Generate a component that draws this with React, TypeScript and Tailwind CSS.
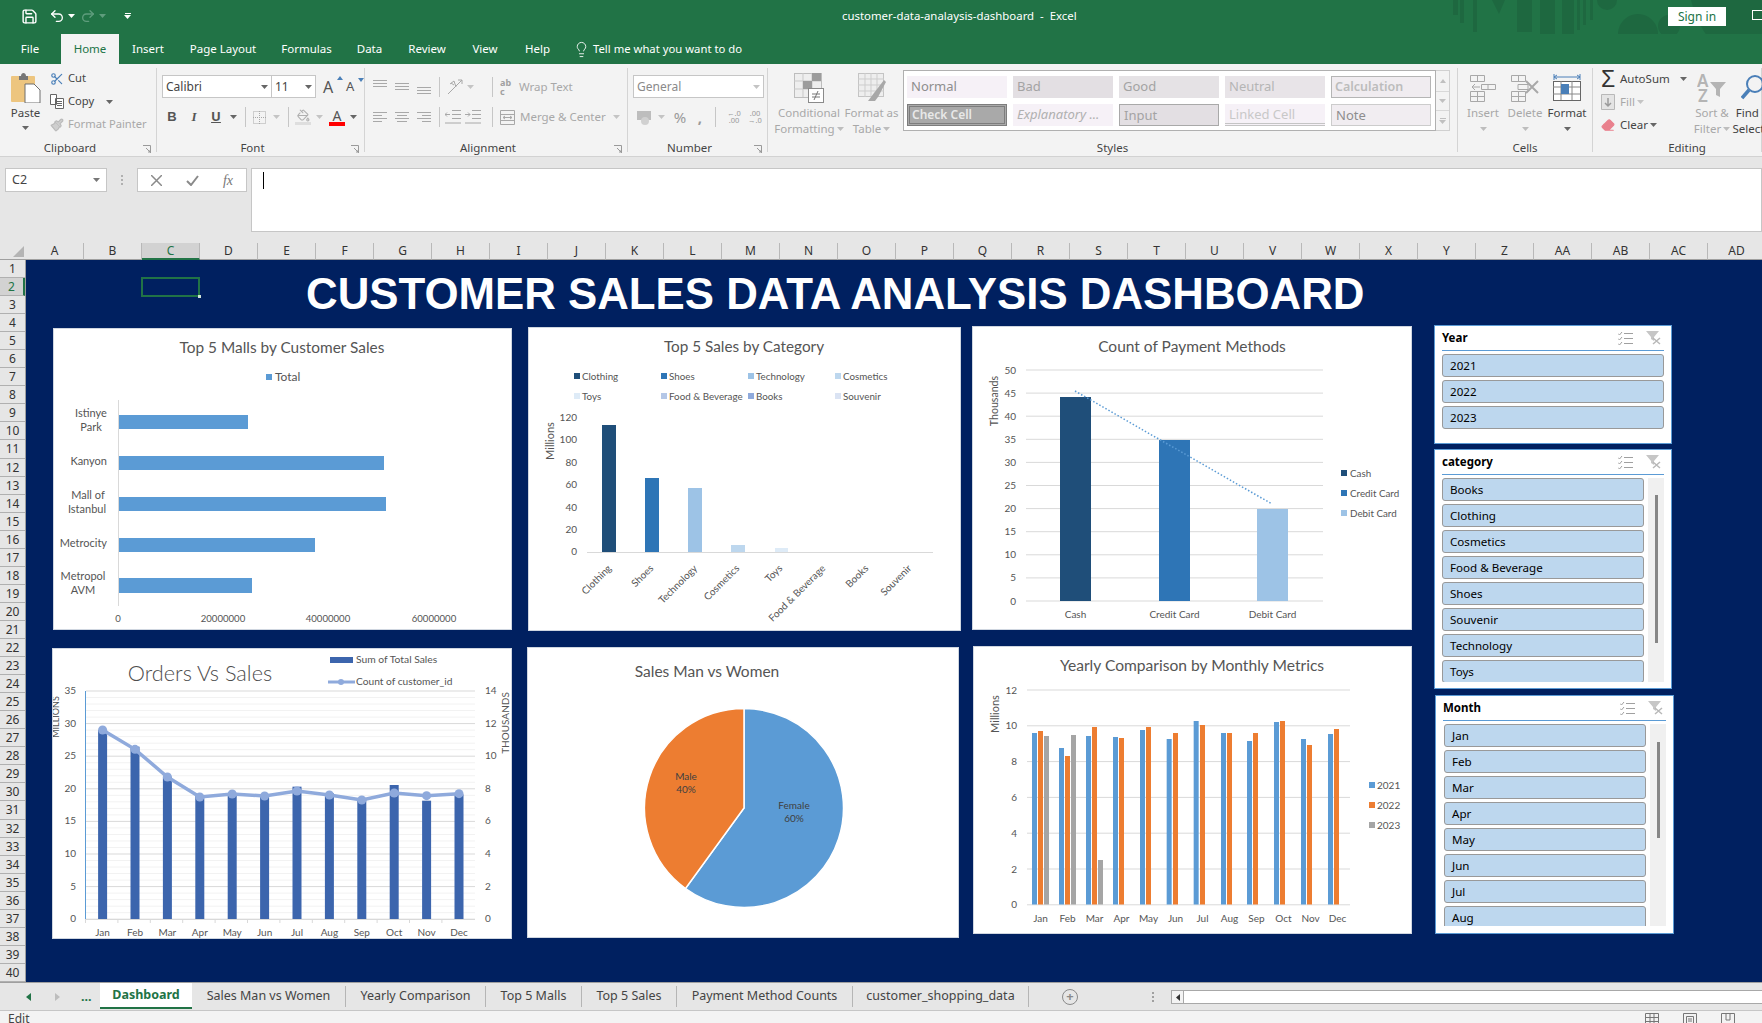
import { Eraser, Lightbulb, Paintbrush, PaintBucket, Save, Scissors, Undo2, Redo2 } from "lucide-react";

const COLUMNS = "A B C D E F G H I J K L M N O P Q R S T U V W X Y Z AA AB AC AD".split(" ");
const ROWS = Array.from({ length: 40 }, (_, i) => i + 1);
const MONTHS = ["Jan", "Feb", "Mar", "Apr", "May", "Jun", "Jul", "Aug", "Sep", "Oct", "Nov", "Dec"];
const GREY = "#a8a8a8";

function Caret({ color = "#666666" }: { color?: string }) {
  return (
    <svg width="7" height="4" viewBox="0 0 7 4" className="shrink-0">
      <path d="M0 0h7L3.5 4z" fill={color} />
    </svg>
  );
}

function Sep({ className = "" }: { className?: string }) {
  return <div className={`w-px h-[20px] bg-[#c6c6c6] shrink-0 ${className}`} />;
}

function Lines({ rows, color = GREY }: { rows: [number, number, number][]; color?: string }) {
  return (
    <svg width="16" height="16" viewBox="0 0 16 16">
      {rows.map(([x, y, w], i) => (
        <rect key={i} x={x} y={y} width={w} height="1" fill={color} />
      ))}
    </svg>
  );
}

function Slot({ w, children }: { w: string; children?: React.ReactNode }) {
  return <div className={`${w} flex items-center justify-center shrink-0`}>{children}</div>;
}

function Group({ label, w, launcher, labelClass = "", children }: { label: string; w: string; launcher?: boolean; labelClass?: string; children: React.ReactNode }) {
  return (
    <div className={`${w} h-[84px] border-r border-[#d4d4d4] shrink-0 flex flex-col`}>
      <div className="h-[72px] flex">{children}</div>
      <div className={`relative h-[12px] leading-[16px] text-center text-[11.5px] text-[#444444] ${labelClass}`}>
        {label}
        {launcher && (
          <svg width="8" height="8" viewBox="0 0 8 8" className="absolute right-[5px] top-[5px]">
            <path d="M0 .5h7.5V8M3 3l4 4M5 7h2V5" fill="none" stroke="#9a9a9a" />
          </svg>
        )}
      </div>
    </div>
  );
}

function BigButton({ w, icon, lines, dim, caret }: { w: string; icon: React.ReactNode; lines: string[]; dim?: boolean; caret?: boolean }) {
  return (
    <div className={`${w} shrink-0 flex flex-col items-center pt-[4px] text-[11.5px] leading-[16px] ${dim ? "text-[#a8a8a8]" : "text-[#444444]"}`}>
      <div className="h-[31px] flex items-center justify-center">{icon}</div>
      <div className="mt-[2px] whitespace-nowrap">{lines[0]}</div>
      {lines[1] ? (
        <div className="whitespace-nowrap flex items-center gap-[2px]">
          {lines[1]}
          {caret && <Caret color={dim ? "#bdbdbd" : "#666666"} />}
        </div>
      ) : (
        caret && (
          <div className="h-[16px] flex items-center">
            <Caret color={dim ? "#bdbdbd" : "#666666"} />
          </div>
        )
      )}
    </div>
  );
}

function StyleCell({ children, className }: { children: string; className: string }) {
  return <div className={`h-[22px] leading-[20px] pl-[4px] text-[13px] whitespace-nowrap overflow-hidden ${className}`}>{children}</div>;
}

function TitleBar() {
  return (
    <div className="relative h-[34px] bg-[#217346] flex items-center pb-[2px] text-white overflow-hidden shrink-0">
      <svg width="312" height="64" viewBox="0 0 312 64" className="absolute right-0 top-0" fill="#1e6840">
        <path d="M3 0h5v15H3zM10 0h4v23h-4zM23 0h4v32h-4zM42 0h13l-6 14zM67 0h15v32H67zM90 0h15v37H90zM112 0h12v35h-12zM127 0h3v30h-3zM133 0h3v25h-3zM140 0h3v20h-3z" />
        <circle cx="157" cy="0" r="10" />
        <path d="M208 34a20 20 0 1 0 0 .1zM208 26a11 11 0 1 1 0 .1z" fillRule="evenodd" />
        <path d="M241 0h71v52h-34c-18-6-30-26-37-52z" />
      </svg>
      <div className="relative flex items-center pl-[21px] w-[842px] shrink-0">
        <Save size={17} strokeWidth={2} />
        <Undo2 size={16} strokeWidth={2} className="ml-[11px]" />
        <div className="ml-[3px]"><Caret color="#ffffff" /></div>
        <Redo2 size={16} strokeWidth={2} className="ml-[5px] text-[#5f9d7d]" />
        <div className="ml-[3px]"><Caret color="#5f9d7d" /></div>
        <div className="ml-[18px] flex flex-col items-center gap-[1px]">
          <div className="w-[6px] h-px bg-white" />
          <Caret color="#ffffff" />
        </div>
      </div>
      <div className="relative text-[11.4px] whitespace-pre">customer-data-analaysis-dashboard  -  Excel</div>
      <div className="relative ml-auto mr-[36px] w-[58px] h-[19px] bg-white text-[#217346] text-[12px] leading-[19px] text-center">Sign in</div>
      <div className="absolute left-[1752px] top-[10px] w-[14px] h-[10px] border border-white" />
    </div>
  );
}

function MenuTabs() {
  const tabs: [string, string][] = [
    ["File", "w-[60px] mr-[1px]"],
    ["Home", "w-[58px]"],
    ["Insert", "w-[58px] mr-[2px]"],
    ["Page Layout", "w-[88px]"],
    ["Formulas", "w-[79px] mr-[1px]"],
    ["Data", "w-[45px] mr-[1px]"],
    ["Review", "w-[68px]"],
    ["View", "w-[48px]"],
    ["Help", "w-[57px] mr-[1px]"],
  ];
  return (
    <div className="h-[30px] bg-[#217346] flex text-white text-[11.5px] shrink-0">
      {tabs.map(([name, w]) => (
        <div key={name} className={`${w} flex items-center justify-center ${name === "Home" ? "bg-[#f3f3f3] text-[#217346]" : ""}`}>
          {name}
        </div>
      ))}
      <div className="flex items-center ml-[6px] gap-[3px]">
        <Lightbulb size={17} strokeWidth={1.25} />
        <span className="whitespace-nowrap text-[11.3px]">Tell me what you want to do</span>
      </div>
    </div>
  );
}

function Ribbon() {
  return (
    <div className="h-[93px] bg-[#f3f3f3] border-b border-[#d2d2d2] pt-[4px] flex text-[#444444] overflow-hidden shrink-0">
      <Group label="Clipboard" w="w-[157px]" launcher labelClass="pr-[16px]">
        <div className="w-[50px] flex flex-col items-center pl-[1px] pt-[4px] text-[11.5px] leading-[16px]">
          <svg width="30" height="31" viewBox="0 0 30 31">
            <rect x="0" y="4" width="24" height="26" rx="1" fill="#edc57f" />
            <path d="M8 4h2c0-4 5-4 5 0h2v4H8z" fill="#767676" />
            <path d="M14 12h9l6 6v13H14z" fill="#ffffff" stroke="#6e6e6e" />
          </svg>
          <div className="mt-[2px]">Paste</div>
          <div className="h-[14px] flex items-center"><Caret /></div>
        </div>
        <div className="flex flex-col text-[11.2px] -mt-[1px]">
          <div className="h-[23px] flex items-center gap-[4px]">
            <Scissors size={14} className="text-[#4a7fb8]" />
            <span>Cut</span>
          </div>
          <div className="h-[23px] flex items-center gap-[4px]">
            <svg width="14" height="15" viewBox="0 0 14 15" fill="#ffffff" stroke="#666666">
              <path d="M.5.5h6v10h-6zM5.5 4.5h8v10h-8zM7 7.5h5M7 9.5h5M7 11.5h5" />
            </svg>
            <span>Copy</span>
            <div className="ml-[8px]"><Caret /></div>
          </div>
          <div className="h-[23px] flex items-center gap-[4px] text-[#a8a8a8]">
            <Paintbrush size={14} className="text-[#bbbbbb]" fill="#cfcfcf" />
            <span className="whitespace-nowrap">Format Painter</span>
          </div>
        </div>
      </Group>

      <Group label="Font" w="w-[208px]" launcher labelClass="pr-[16px]">
        <div className="flex flex-col pl-[5px] pt-[7px]">
          <div className="h-[23px] flex items-center">
            <div className="w-[110px] h-full bg-white border border-[#c6c6c6] flex items-center justify-between px-[3px] text-[12px]">
              Calibri
              <Caret />
            </div>
            <div className="w-[44px] h-full bg-white border border-[#c6c6c6] border-l-0 flex items-center justify-between px-[3px] text-[12px]">
              11
              <Caret />
            </div>
            <div className="ml-[7px] w-[23px] text-[16px] text-[#555555] relative">A<div className="absolute right-[3px] top-[1px]"><svg width="6" height="4"><path d="M0 4h6L3 0z" fill="#4a7fb8" /></svg></div></div>
            <div className="w-[18px] text-[13px] text-[#555555] relative">A<div className="absolute right-[0px] top-[1px]"><svg width="6" height="4"><path d="M0 0h6L3 4z" fill="#4a7fb8" /></svg></div></div>
          </div>
          <div className="mt-[8px] h-[22px] flex items-center -ml-[1px] text-[13px]">
            <Slot w="w-[22px]"><b className="font-['Liberation_Sans',sans-serif] text-[#555555]">B</b></Slot>
            <Slot w="w-[22px]"><i className="font-['Liberation_Serif',serif] font-bold text-[#555555]">I</i></Slot>
            <Slot w="w-[22px]"><span className="underline font-bold text-[#555555]">U</span></Slot>
            <Slot w="w-[12px]"><Caret /></Slot>
            <Slot w="w-[12px]"><Sep /></Slot>
            <Slot w="w-[16px]">
              <svg width="13" height="13" viewBox="0 0 13 13" fill="none" stroke={GREY} strokeDasharray="1 1"><path d="M.5.5h12v12H.5zM6.5 0v13M0 6.5h13" /></svg>
            </Slot>
            <Slot w="w-[18px]"><Caret color="#c4c4c4" /></Slot>
            <Slot w="w-[6px]"><Sep /></Slot>
            <Slot w="w-[24px]">
              <div className="flex flex-col items-center">
                <PaintBucket size={13} className="text-[#b0b0b0]" />
                <div className="w-[16px] h-[3px] bg-[#dedede]" />
              </div>
            </Slot>
            <Slot w="w-[8px]"><Caret color="#c4c4c4" /></Slot>
            <Slot w="w-[28px]">
              <div className="flex flex-col items-center leading-[13px] text-[14px] text-[#555555]">
                A
                <div className="w-[16px] h-[4px] bg-[#ff0000]" />
              </div>
            </Slot>
            <Slot w="w-[4px]"><Caret /></Slot>
          </div>
        </div>
      </Group>

      <Group label="Alignment" w="w-[263px]" launcher labelClass="pr-[16px]">
        <div className="flex flex-col pl-[4px] pt-[7px] text-[11.5px] text-[#a8a8a8]">
          <div className="h-[23px] flex items-center">
            <Slot w="w-[22px]"><Lines rows={[[1, 1, 14], [1, 4, 14], [1, 7, 14]]} /></Slot>
            <Slot w="w-[22px]"><Lines rows={[[1, 4, 14], [1, 7, 14], [1, 10, 14]]} /></Slot>
            <Slot w="w-[22px]"><Lines rows={[[1, 8, 14], [1, 11, 14], [1, 14, 14]]} /></Slot>
            <Slot w="w-[8px]"><Sep /></Slot>
            <Slot w="w-[24px]">
              <svg width="16" height="16" viewBox="0 0 16 16" fill="none" stroke={GREY}><path d="M1 15L15 1M11 1h4v4M3 5l4-3 2 6M4 4l3 2" /></svg>
            </Slot>
            <Slot w="w-[6px]"><Caret color="#c4c4c4" /></Slot>
            <Sep className="ml-[19px]" />
            <div className="ml-[7px] w-[16px] text-[9px] leading-[9px] font-bold text-[#a0a0a0]">ab<br />c</div>
            <span className="ml-[3px] whitespace-nowrap">Wrap Text</span>
          </div>
          <div className="mt-[8px] h-[22px] flex items-center">
            <Slot w="w-[22px]"><Lines rows={[[1, 3, 14], [1, 6, 9], [1, 9, 14], [1, 12, 9]]} /></Slot>
            <Slot w="w-[22px]"><Lines rows={[[1, 3, 14], [3, 6, 10], [1, 9, 14], [3, 12, 10]]} /></Slot>
            <Slot w="w-[22px]"><Lines rows={[[1, 3, 14], [6, 6, 9], [1, 9, 14], [6, 12, 9]]} /></Slot>
            <Slot w="w-[8px]"><Sep /></Slot>
            <Slot w="w-[20px]">
              <svg width="16" height="14" viewBox="0 0 16 14" fill="none" stroke={GREY}><path d="M7 .5h9M7 4.5h9M7 8.5h9M0 13h16M5 4.5H0l2-2M0 4.5l2 2" /></svg>
            </Slot>
            <Slot w="w-[20px]">
              <svg width="16" height="14" viewBox="0 0 16 14" fill="none" stroke={GREY}><path d="M7 .5h9M7 4.5h9M7 8.5h9M0 13h16M0 4.5h5l-2-2M5 4.5l-2 2" /></svg>
            </Slot>
            <Sep className="ml-[9px]" />
            <div className="ml-[7px]">
              <svg width="15" height="15" viewBox="0 0 15 15" fill="none" stroke={GREY}><path d="M.5.5h14v14H.5zM0 4.5h15M0 10.5h15M3 7.5h9M3 7.5l2-1.5M3 7.5l2 1.5M12 7.5l-2-1.5M12 7.5l-2 1.5" /></svg>
            </div>
            <span className="ml-[5px] whitespace-nowrap">Merge &amp; Center</span>
            <div className="ml-[7px]"><Caret color="#c4c4c4" /></div>
          </div>
        </div>
      </Group>

      <Group label="Number" w="w-[140px]" launcher labelClass="pr-[16px]">
        <div className="flex flex-col pl-[5px] pt-[7px]">
          <div className="w-[131px] h-[23px] bg-white border border-[#c6c6c6] flex items-center justify-between px-[3px] text-[12px] text-[#8a8a8a]">
            General
            <Caret color="#c4c4c4" />
          </div>
          <div className="mt-[8px] h-[22px] flex items-center text-[#9a9a9a] -ml-[5px]">
            <Slot w="w-[26px] ml-[3px]">
              <svg width="15" height="15" viewBox="0 0 15 15"><rect y="1" width="14" height="9" fill="#bdbdbd" /><circle cx="8" cy="11" r="4" fill="#d0d0d0" /></svg>
            </Slot>
            <Slot w="w-[8px]"><Caret color="#c4c4c4" /></Slot>
            <Slot w="w-[24px]"><span className="text-[15px] ml-[6px]">%</span></Slot>
            <Slot w="w-[18px]"><span className="text-[15px] font-bold ml-[4px]">,</span></Slot>
            <Slot w="w-[16px]"><Sep /></Slot>
            <Slot w="w-[22px]"><span className="text-[7.5px] leading-[7px] text-center">←.0<br />.00</span></Slot>
            <Slot w="w-[20px]"><span className="text-[7.5px] leading-[7px] text-center">.00<br />→.0</span></Slot>
          </div>
        </div>
      </Group>

      <Group label="Styles" w="w-[690px]">
        <div className="w-[10px] shrink-0" />
        <BigButton
          w="w-[62px]"
          dim
          caret
          lines={["Conditional", "Formatting"]}
          icon={
            <svg width="30" height="30" viewBox="0 0 30 30">
              <rect x="0.5" y="0.5" width="27" height="24" fill="#eeeeee" stroke="#bdbdbd" />
              <path d="M0 8h27M0 16h27M9 0v24M18 0v24" stroke="#c9c9c9" />
              <rect x="9" y="8" width="9" height="8" fill="#9c9c9c" />
              <rect x="18" y="0" width="9" height="8" fill="#9c9c9c" />
              <rect x="14.5" y="15.5" width="15" height="14" fill="#ffffff" stroke="#8a8a8a" />
              <path d="M18 21h8M18 24h8M24 18l-4 9" stroke="#777777" fill="none" />
            </svg>
          }
        />
        <BigButton
          w="w-[63px]"
          dim
          caret
          lines={["Format as", "Table"]}
          icon={
            <svg width="30" height="30" viewBox="0 0 30 30">
              <rect x="1.5" y="0.5" width="25" height="23" fill="#eeeeee" stroke="#c4c4c4" />
              <path d="M1 6h26M1 12h26M1 18h26M8 0v24M14 0v24M20 0v24" stroke="#cdcdcd" />
              <path d="M27 7l2 2-8 15-3 4h-7l6-8z" fill="#a8a8a8" />
            </svg>
          }
        />
        <div className="w-[533px] h-[61px] mt-[2px] bg-white border border-[#b0b0b0] pt-[5px] pl-[3px] grid grid-cols-[repeat(5,100px)] gap-x-[6px] gap-y-[6px] content-start text-[#8e8e8e] shrink-0">
          <StyleCell className="bg-[#f6f1f7]">Normal</StyleCell>
          <StyleCell className="bg-[#e3dfe3] text-[#a3a3a3]">Bad</StyleCell>
          <StyleCell className="bg-[#e5e2e5] text-[#a3a3a3]">Good</StyleCell>
          <StyleCell className="bg-[#e8e4e8] text-[#b5b5b5]">Neutral</StyleCell>
          <div className="h-[22px] bg-[#f0ecf0] border border-[#b5b5b5] leading-[20px] pl-[3px] text-[12.5px] font-semibold text-[#bcbcbc]">Calculation</div>
          <div className="h-[22px] bg-[#a9a9a9] border-[3px] border-double border-[#7d7d7d] leading-[15px] pl-[2px] text-[12px] font-semibold text-[#e8e8e8] whitespace-nowrap">Check Cell</div>
          <StyleCell className="bg-[#f6f1f7] italic text-[#b0b0b0]">Explanatory ...</StyleCell>
          <StyleCell className="bg-[#e3dfe3] border border-[#a9a9a9] text-[#a3a3a3]">Input</StyleCell>
          <div className="h-[22px] bg-[#f6f1f7] border-b-[3px] border-double border-[#c4c4c4] leading-[20px] pl-[4px] text-[13px] text-[#c8c8c8]">Linked Cell</div>
          <StyleCell className="bg-[#f1edf1] border border-[#cccccc] text-[#8e8e8e]">Note</StyleCell>
        </div>
        <div className="w-[14px] h-[61px] mt-[2px] border border-l-0 border-[#d0d0d0] flex flex-col shrink-0">
          <div className="h-[21px] flex items-center justify-center border-b border-[#d8d8d8]"><svg width="6" height="4"><path d="M0 4h6L3 0z" fill="#c0c0c0" /></svg></div>
          <div className="h-[19px] flex items-center justify-center border-b border-[#d8d8d8]"><Caret color="#c0c0c0" /></div>
          <div className="flex-1 flex flex-col gap-[1px] items-center justify-center"><div className="w-[6px] h-px bg-[#c0c0c0]" /><Caret color="#c0c0c0" /></div>
        </div>
      </Group>

      <Group label="Cells" w="w-[135px]">
        <div className="w-[4px] shrink-0" />
        <BigButton
          w="w-[42px]"
          dim
          caret
          lines={["Insert"]}
          icon={
            <svg width="28" height="30" viewBox="0 0 28 30" fill="none" stroke={GREY}>
              <path d="M1.5 2.5h14v6h-14zM8.5 2v6M1.5 18.5h14v10h-14zM8.5 18v10M1 23.5h15M12.5 11.5h14v5h-14zM19 11v6M3 14h8M3 14l3-3M3 14l3 3" />
            </svg>
          }
        />
        <BigButton
          w="w-[42px]"
          dim
          caret
          lines={["Delete"]}
          icon={
            <svg width="30" height="30" viewBox="0 0 30 30" fill="none" stroke={GREY}>
              <path d="M1.5 2.5h14v6h-14zM8.5 2v6M1.5 18.5h14v10h-14zM8.5 18v10M1 23.5h15M8 11.5h10v5H8z" />
              <path d="M16 8l12 12M28 8L16 20" strokeWidth="2" />
            </svg>
          }
        />
        <BigButton
          w="w-[42px]"
          caret
          lines={["Format"]}
          icon={
            <svg width="28" height="30" viewBox="0 0 28 30" fill="none">
              <path d="M1 4h26M1 1v6M27 1v6M1 4l3-2M1 4l3 2M27 4l-3-2M27 4l-3 2" stroke="#4a7fb8" />
              <rect x="0.5" y="8.5" width="27" height="19" stroke="#666666" fill="#ffffff" />
              <path d="M0 14h27M0 21h27M8 8v19M19 8v19" stroke="#888888" />
              <rect x="8" y="11" width="8" height="10" fill="#4a7fb8" />
            </svg>
          }
        />
      </Group>

      <Group label="Editing" w="w-[169px]" labelClass="pl-[20px]">
        <div className="w-[102px] pl-[8px] -mt-[1px] flex flex-col text-[11.5px] shrink-0">
          <div className="h-[23px] flex items-center">
            <span className="w-[19px] text-[23px] leading-[20px] font-['Liberation_Sans',sans-serif] text-[#333333]">Σ</span>
            <span className="whitespace-nowrap">AutoSum</span>
            <div className="ml-[10px]"><Caret /></div>
          </div>
          <div className="h-[23px] flex items-center text-[#a8a8a8]">
            <div className="w-[19px]">
              <svg width="14" height="16" viewBox="0 0 14 16" fill="#e4e4e4" stroke="#b8b8b8"><path d="M.5.5h13v15H.5z" /><path d="M7 4v8M4 9l3 3 3-3" fill="none" stroke="#9a9a9a" strokeWidth="1.5" /></svg>
            </div>
            Fill
            <div className="ml-[2px]"><Caret color="#c4c4c4" /></div>
          </div>
          <div className="h-[23px] flex items-center">
            <div className="w-[19px]"><Eraser size={14} className="text-[#e9808d]" fill="#e9808d" /></div>
            Clear
            <div className="ml-[2px]"><Caret /></div>
          </div>
        </div>
        <BigButton
          w="w-[34px]"
          dim
          caret
          lines={["Sort &", "Filter"]}
          icon={
            <svg width="30" height="30" viewBox="0 0 30 30">
              <text x="0" y="14" fontSize="17" fontWeight="600" fill="#b4b4b4">A</text>
              <text x="1" y="29" fontSize="17" fontWeight="600" fill="#b4b4b4">Z</text>
              <path d="M13 9h16l-6 7v8l-4-2v-6z" fill="#b4b4b4" />
            </svg>
          }
        />
        <div className="w-[6px] shrink-0" />
        <BigButton
          w="w-[36px]"
          lines={["Find &", "Select"]}
          caret
          icon={
            <svg width="24" height="28" viewBox="0 0 24 28" fill="none" stroke="#4a7fb8">
              <circle cx="14" cy="10" r="8" strokeWidth="2" />
              <path d="M8 16L1 24" strokeWidth="3.5" />
            </svg>
          }
        />
      </Group>
    </div>
  );
}

function FormulaBar() {
  return (
    <div className="h-[75px] bg-[#e6e6e6] flex pl-[5px] pt-[11px] shrink-0">
      <div className="w-[102px] h-[24px] bg-white border border-[#c6c6c6] flex items-center justify-between pl-[6px] pr-[6px] text-[12.5px] text-[#444444]">
        C2
        <Caret color="#777777" />
      </div>
      <div className="w-[30px] h-[24px] flex flex-col items-center justify-center gap-[2px]">
        <div className="w-[2px] h-[2px] bg-[#b0b0b0]" />
        <div className="w-[2px] h-[2px] bg-[#b0b0b0]" />
        <div className="w-[2px] h-[2px] bg-[#b0b0b0]" />
      </div>
      <div className="w-[110px] h-[24px] bg-white border border-[#c6c6c6] flex items-center">
        <div className="w-[37px] flex justify-center">
          <svg width="11" height="11" viewBox="0 0 11 11" stroke="#8a8a8a" strokeWidth="1.5"><path d="M0 0l11 11M11 0L0 11" /></svg>
        </div>
        <div className="w-[35px] flex justify-center">
          <svg width="13" height="11" viewBox="0 0 13 11" fill="none" stroke="#8a8a8a" strokeWidth="2"><path d="M1 6l4 4 7-9" /></svg>
        </div>
        <div className="w-[36px] text-center font-['Liberation_Serif',serif] italic text-[14px] text-[#777777]">fx</div>
      </div>
      <div className="ml-[4px] flex-1 h-[64px] bg-white border border-[#c6c6c6] pl-[11px] pt-[3px]">
        <div className="w-px h-[17px] bg-black" />
      </div>
    </div>
  );
}

function ColumnHeaders() {
  return (
    <div className="h-[28px] bg-[#e6e6e6] flex items-end overflow-hidden shrink-0">
      <div className="w-[26px] h-[17px] flex items-end justify-end pr-[2px] pb-[2px] shrink-0 border-b border-[#9f9f9f]">
        <svg width="11" height="11" viewBox="0 0 11 11"><path d="M11 0v11H0z" fill="#b4b4b4" /></svg>
      </div>
      <div className="grid grid-cols-[repeat(30,58px)] h-[17px] shrink-0">
        {COLUMNS.map((c) => (
          <div
            key={c}
            className={`text-center text-[12px] leading-[15px] border-r border-[#b8b8b8] ${
              c === "C" ? "bg-[#d2d2d2] text-[#217346] border-b-2 border-b-[#217346]" : "text-[#333333] border-b border-b-[#9f9f9f]"
            }`}
          >
            {c}
          </div>
        ))}
      </div>
    </div>
  );
}

function ChartFrame({ className, children }: { className: string; children: React.ReactNode }) {
  return (
    <div className={`absolute bg-white border border-[#cfd6e0] overflow-hidden ${className}`}>
      <svg width="100%" height="100%" className="font-['Lato',sans-serif] block">
        {children}
      </svg>
    </div>
  );
}

function ChartText({ x, y, size = 11, anchor = "start", color = "#555555", rotate, children, weight }: { x: number; y: number; size?: number; anchor?: "start" | "middle" | "end"; color?: string; rotate?: number; children: React.ReactNode; weight?: number }) {
  return (
    <text x={x} y={y} fontSize={size} textAnchor={anchor} fill={color} fontWeight={weight} transform={rotate ? `rotate(${rotate} ${x} ${y})` : undefined}>
      {children}
    </text>
  );
}

function MallsChart() {
  const bars = [
    [86, 14, 129],
    [127, 14, 265],
    [168, 14, 267],
    [209, 14, 196],
    [249, 15, 133],
  ];
  return (
    <ChartFrame className="left-[27px] top-[68px] w-[459px] h-[302px]">
      <ChartText x={228} y={24} size={15.4} anchor="middle">Top 5 Malls by Customer Sales</ChartText>
      <rect x={212} y={45} width={6} height={6} fill="#5b9bd5" />
      <ChartText x={221} y={52} size={12}>Total</ChartText>
      <line x1={64.5} x2={64.5} y1={71} y2={277} stroke="#d9d9d9" />
      {bars.map(([y, h, w]) => (
        <rect key={y} x={65} y={y} width={w} height={h} fill="#5b9bd5" />
      ))}
      <ChartText x={37} y={88} anchor="middle">Istinye</ChartText>
      <ChartText x={37} y={102} anchor="middle">Park</ChartText>
      <ChartText x={53} y={136} anchor="end">Kanyon</ChartText>
      <ChartText x={34} y={170} anchor="middle">Mall of</ChartText>
      <ChartText x={33} y={184} anchor="middle">Istanbul</ChartText>
      <ChartText x={53} y={218} anchor="end">Metrocity</ChartText>
      <ChartText x={29} y={251} anchor="middle">Metropol</ChartText>
      <ChartText x={29} y={265} anchor="middle">AVM</ChartText>
      {[["0", 64], ["20000000", 169], ["40000000", 274], ["60000000", 380]].map(([t, x]) => (
        <ChartText key={t} x={Number(x)} y={293} size={9.6} anchor="middle">{t}</ChartText>
      ))}
    </ChartFrame>
  );
}

function CategoryChart() {
  const legend: [string, string, number, number][] = [
    ["Clothing", "#1f4e79", 45, 45],
    ["Shoes", "#2e75b6", 132, 45],
    ["Technology", "#9dc3e6", 219, 45],
    ["Cosmetics", "#bdd7ee", 306, 45],
    ["Toys", "#deebf7", 45, 65],
    ["Food & Beverage", "#b4c7e7", 132, 65],
    ["Books", "#8faadc", 219, 65],
    ["Souvenir", "#dae3f3", 306, 65],
  ];
  const bars = [
    [73, 97, 14, "#1f4e79"],
    [116, 150, 14, "#2e75b6"],
    [159, 160, 14, "#9dc3e6"],
    [202, 217, 14, "#bdd7ee"],
    [246, 220, 13, "#deebf7"],
  ] as const;
  const labels: [string, number][] = [
    ["Clothing", 83], ["Shoes", 125], ["Technology", 169], ["Cosmetics", 211],
    ["Toys", 254], ["Food & Beverage", 297], ["Books", 340], ["Souvenir", 383],
  ];
  return (
    <ChartFrame className="left-[502px] top-[67px] w-[433px] h-[304px]">
      <ChartText x={215} y={24} size={15.3} anchor="middle">Top 5 Sales by Category</ChartText>
      {legend.map(([name, color, x, y]) => (
        <g key={name}>
          <rect x={x} y={y} width={6} height={6} fill={color} />
          <ChartText x={x + 8} y={y + 6.5} size={9.8}>{name}</ChartText>
        </g>
      ))}
      <ChartText x={25} y={113} size={11} anchor="middle" rotate={-90}>Millions</ChartText>
      {["120", "100", "80", "60", "40", "20", "0"].map((t, i) => (
        <ChartText key={t} x={48} y={[93, 115, 138, 160, 183, 205, 227][i]} size={10} anchor="end">{t}</ChartText>
      ))}
      {bars.map(([x, top, w, color]) => (
        <rect key={x} x={x} y={top} width={w} height={224 - top} fill={color} />
      ))}
      <line x1={58} x2={404} y1={224.5} y2={224.5} stroke="#d9d9d9" />
      {labels.map(([t, x]) => (
        <ChartText key={t} x={x} y={241} size={10} anchor="end" rotate={-45}>{t}</ChartText>
      ))}
    </ChartFrame>
  );
}

function PaymentChart() {
  const ticks = [50, 45, 40, 35, 30, 25, 20, 15, 10, 5, 0];
  const bars: [number, number, string, string][] = [
    [87, 70, "#1f4e79", "Cash"],
    [186, 113, "#2e75b6", "Credit Card"],
    [284, 182, "#9dc3e6", "Debit Card"],
  ];
  return (
    <ChartFrame className="left-[946px] top-[66px] w-[440px] h-[304px]">
      <ChartText x={219} y={25} size={15.5} anchor="middle">Count of Payment Methods</ChartText>
      {ticks.map((t, i) => {
        const y = 43 + i * 23.1;
        return (
          <g key={t}>
            <line x1={53} x2={350} y1={y} y2={y} stroke="#d9d9d9" />
            <ChartText x={43} y={y + 3.5} anchor="end" size={10}>{t}</ChartText>
          </g>
        );
      })}
      {bars.map(([x, top, color, name], i) => (
        <g key={name}>
          <rect x={x} y={top} width={31} height={274 - top} fill={color} />
          <ChartText x={x + 15.5} y={290.5} size={10} anchor="middle">{name}</ChartText>
          <rect x={368} y={143 + i * 20} width={6} height={6} fill={color} />
          <ChartText x={377} y={149.5 + i * 20} size={9.8}>{name}</ChartText>
        </g>
      ))}
      <line x1={102} y1={64} x2={299} y2={177} stroke="#5b9bd5" strokeWidth={1.5} strokeDasharray="1.5 2" />
      <ChartText x={25} y={74} size={10.6} anchor="middle" rotate={-90}>Thousands</ChartText>
    </ChartFrame>
  );
}

function OrdersChart() {
  const barTops = [300, 350, 440, 498, 490, 497, 470, 490, 510, 465, 512, 493];
  const lineTops = [300, 358, 441, 501, 492, 498, 483, 495, 510, 489, 497, 491];
  const cx = (i: number) => 49.6 + i * 32.4;
  const points = lineTops.map((z, i) => `${cx(i)},${z / 3 - 19}`).join(" ");
  const minor = Array.from({ length: 36 }, (_, i) => 42 + i * 6.52);
  return (
    <ChartFrame className="left-[26px] top-[388px] w-[460px] h-[291px]">
      <ChartText x={147} y={32} size={21.7} anchor="middle" weight={300} color="#4d4d4d">Orders Vs Sales</ChartText>
      <rect x={277} y={8} width={23} height={6} fill="#3c65ad" />
      <ChartText x={303} y={14} size={10.3}>Sum of Total Sales</ChartText>
      <line x1={275} x2={302} y1={33} y2={33} stroke="#8faadc" strokeWidth={3} />
      <circle cx={288} cy={33} r={3} fill="#8faadc" />
      <ChartText x={303} y={36} size={10.2}>Count of customer_id</ChartText>
      {minor.map((y, i) => (
        <line key={y} x1={33} x2={422} y1={y} y2={y} stroke={i % 5 === 0 ? "#d9d9d9" : "#f2f2f2"} />
      ))}
      {[35, 30, 25, 20, 15, 10, 5, 0].map((t, i) => (
        <ChartText key={t} x={23} y={45 + i * 32.6} size={10} anchor="end">{t}</ChartText>
      ))}
      {[14, 12, 10, 8, 6, 4, 2, 0].map((t, i) => (
        <ChartText key={t} x={432} y={45 + i * 32.6} size={10}>{t}</ChartText>
      ))}
      <line x1={32.5} x2={32.5} y1={42} y2={270} stroke="#5b9bd5" />
      {MONTHS.map((m, i) => (
        <g key={m}>
          <rect x={cx(i) - 4.5} y={barTops[i] / 3 - 19} width={9} height={270 - (barTops[i] / 3 - 19)} fill="#3c65ad" />
          <line x1={32.5 + i * 32.4} x2={32.5 + i * 32.4} y1={270} y2={274} stroke="#d9d9d9" />
          <ChartText x={cx(i)} y={287} size={10} anchor="middle">{m}</ChartText>
        </g>
      ))}
      <line x1={32} x2={422} y1={270.5} y2={270.5} stroke="#d9d9d9" />
      <polyline points={points} fill="none" stroke="#8faadc" strokeWidth={3.5} />
      {lineTops.map((z, i) => (
        <circle key={i} cx={cx(i)} cy={z / 3 - 19} r={4.5} fill="#8faadc" />
      ))}
      <ChartText x={6} y={68} size={9} anchor="middle" rotate={-90}>MILLIONS</ChartText>
      <ChartText x={456} y={74} size={10} anchor="middle" rotate={-90}>THOUSANDS</ChartText>
    </ChartFrame>
  );
}

function PieChart() {
  return (
    <ChartFrame className="left-[501px] top-[387px] w-[432px] h-[291px]">
      <ChartText x={179} y={29} size={15.5} anchor="middle">Sales Man vs Women</ChartText>
      <path d="M216 60.5A99.5 99.5 0 1 1 157.5 240.5L216 160z" fill="#5b9bd5" stroke="#ffffff" strokeWidth={1.5} />
      <path d="M216 160L157.5 240.5A99.5 99.5 0 0 1 216 60.5z" fill="#ed7d31" stroke="#ffffff" strokeWidth={1.5} />
      <ChartText x={158} y={132} size={10} anchor="middle" color="#404040">Male</ChartText>
      <ChartText x={158} y={145} size={10} anchor="middle" color="#404040">40%</ChartText>
      <ChartText x={266} y={161} size={10} anchor="middle" color="#404040">Female</ChartText>
      <ChartText x={266} y={174} size={10} anchor="middle" color="#404040">60%</ChartText>
    </ChartFrame>
  );
}

function YearlyChart() {
  const xs = [
    [201, 219, 237], [282, 300, 318], [363, 381, 399], [444, 462], [525, 543], [605, 624],
    [686, 705], [768, 786], [846, 864], [927, 945], [1008, 1026], [1089, 1107],
  ];
  const tops = [
    [279, 273, 288], [324, 348, 285], [288, 261, 660], [291, 294], [270, 261], [297, 279],
    [243, 255], [279, 279], [303, 279], [246, 243], [297, 315], [282, 267],
  ];
  const colors = ["#5b9bd5", "#ed7d31", "#a5a5a5"];
  return (
    <ChartFrame className="left-[947px] top-[386px] w-[439px] h-[288px]">
      <ChartText x={218} y={24} size={15.6} anchor="middle">Yearly Comparison by Monthly Metrics</ChartText>
      {[12, 10, 8, 6, 4, 2, 0].map((t, i) => {
        const y = 43 + i * 35.8;
        return (
          <g key={t}>
            <line x1={53} x2={376} y1={y} y2={y} stroke="#d9d9d9" />
            <ChartText x={43} y={y + 3.5} anchor="end" size={10}>{t}</ChartText>
          </g>
        );
      })}
      {xs.map((group, m) =>
        group.map((z, s) => (
          <rect key={z} x={z / 3 - 9} y={tops[m][s] / 3 - 7} width={5} height={257.5 - (tops[m][s] / 3 - 7)} fill={colors[s]} />
        ))
      )}
      {MONTHS.map((m, i) => (
        <ChartText key={m} x={66.5 + i * 27} y={275} size={10} anchor="middle">{m}</ChartText>
      ))}
      {["2021", "2022", "2023"].map((y, i) => (
        <g key={y}>
          <rect x={395} y={135 + i * 20} width={6} height={6} fill={colors[i]} />
          <ChartText x={403} y={141.5 + i * 20} size={10}>{y}</ChartText>
        </g>
      ))}
      <ChartText x={25} y={67} size={11} anchor="middle" rotate={-90}>Millions</ChartText>
    </ChartFrame>
  );
}

function Slicer({ title, items, className, listClass, itemClass, track }: { title: string; items: string[]; className: string; listClass: string; itemClass: string; track?: { pad: string; thumb: string } }) {
  return (
    <div className={`absolute bg-white border border-[#5b9bd5] px-[7px] font-['Noto_Sans',sans-serif] ${className}`}>
      <div className="h-[25px] border-b border-[#5b9bd5] flex items-center text-[11.5px] font-bold text-black">
        <span>{title}</span>
        <div className="ml-auto flex items-center gap-[13px] mr-[3px]">
          <svg width="15" height="13" viewBox="0 0 15 13" fill="none" stroke="#a0a0a0">
            <path d="M6 1.5h9M6 6.5h9M6 11.5h9M0 1.5l1.5 1.5L4 0M0 6.5L1.5 8 4 5M0 11.5L1.5 13 4 10" />
          </svg>
          <svg width="15" height="14" viewBox="0 0 15 14">
            <path d="M0 0h13L8 6v4L5 8V6z" fill="#c6c6c6" />
            <path d="M7 7l7 6M14 7l-7 6" stroke="#b8b8b8" strokeWidth="1.5" />
          </svg>
        </div>
      </div>
      <div className={`flex mt-[3px] overflow-hidden ${listClass}`}>
        <div className="flex flex-col gap-[3px] shrink-0">
          {items.map((item) => (
            <div key={item} className={`h-[23px] shrink-0 bg-[#bdd7ee] border border-[#999999] rounded-[3px] pl-[7px] leading-[21px] text-[11.6px] text-black ${itemClass}`}>
              {item}
            </div>
          ))}
        </div>
        {track && (
          <div className={`ml-[4px] w-[17px] bg-[#f0f0f0] flex justify-center ${track.pad}`}>
            <div className={`w-[3px] bg-[#868686] ${track.thumb}`} />
          </div>
        )}
      </div>
    </div>
  );
}

function Sheet() {
  return (
    <div className="flex h-[722px] shrink-0">
      <div className="w-[26px] shrink-0 grid grid-rows-[repeat(40,1fr)] bg-[#e6e6e6] border-r border-[#9f9f9f]">
        {ROWS.map((r) => (
          <div
            key={r}
            className={`text-center text-[12px] leading-[17px] border-b border-[#b0b0b0] ${
              r === 2 ? "bg-[#d2d2d2] text-[#217346] border-r-2 border-r-[#217346]" : "text-[#333333]"
            }`}
          >
            {r}
          </div>
        ))}
      </div>
      <div className="relative flex-1 bg-[#002060] overflow-hidden">
        <div className="absolute left-[280px] top-[9px] text-white font-['Liberation_Sans',sans-serif] font-bold text-[43.8px] leading-[50px] whitespace-nowrap">
          CUSTOMER SALES DATA ANALYSIS DASHBOARD
        </div>
        <div className="absolute left-[115px] top-[17px] w-[59px] h-[20px] border-2 border-[#217346]">
          <div className="absolute -right-[3px] -bottom-[3px] w-[3px] h-[3px] bg-[#cfe3d8]" />
        </div>
        <MallsChart />
        <CategoryChart />
        <PaymentChart />
        <OrdersChart />
        <PieChart />
        <YearlyChart />
        <Slicer title="Year" items={["2021", "2022", "2023"]} className="left-[1408px] top-[65px] w-[238px] h-[119px]" listClass="" itemClass="w-[222px]" />
        <Slicer
          title="category"
          items={["Books", "Clothing", "Cosmetics", "Food & Beverage", "Shoes", "Souvenir", "Technology", "Toys"]}
          className="left-[1408px] top-[189px] w-[238px] h-[240px]"
          listClass="h-[204px]"
          itemClass="w-[202px]"
          track={{ pad: "pt-[17px]", thumb: "h-[148px]" }}
        />
        <Slicer
          title="Month"
          items={MONTHS}
          className="left-[1409px] top-[435px] w-[239px] h-[239px]"
          listClass="h-[202px]"
          itemClass="w-[202px] ml-[1px]"
          track={{ pad: "pt-[18px]", thumb: "h-[96px]" }}
        />
      </div>
    </div>
  );
}

function SheetTabs() {
  const tabs: [string, string][] = [
    ["Sales Man vs Women", "w-[154px]"],
    ["Yearly Comparison", "w-[140px]"],
    ["Top 5 Malls", "w-[96px]"],
    ["Top 5 Sales", "w-[95px]"],
    ["Payment Method Counts", "w-[176px]"],
    ["customer_shopping_data", "w-[176px]"],
  ];
  return (
    <div className="h-[29px] bg-[#e6e6e6] border-t border-[#9f9f9f] border-b border-b-[#c6c6c6] flex text-[12.5px] text-[#444444] shrink-0">
      <div className="w-[100px] flex items-center shrink-0">
        <svg width="5" height="8" viewBox="0 0 5 8" className="ml-[26px]"><path d="M5 0v8L0 4z" fill="#217346" /></svg>
        <svg width="5" height="8" viewBox="0 0 5 8" className="ml-[24px]"><path d="M0 0v8l5-4z" fill="#bdbdbd" /></svg>
        <span className="ml-[21px] font-bold text-[#217346] leading-[10px]">...</span>
      </div>
      <div className="w-[92px] h-[26px] pt-[1px] bg-white border-b-2 border-[#217346] flex items-center justify-center font-bold text-[#217346] shrink-0">Dashboard</div>
      {tabs.map(([name, w]) => (
        <div key={name} className={`${w} my-[3px] flex items-center justify-center border-r border-[#b5b5b5] shrink-0 whitespace-nowrap`}>
          {name}
        </div>
      ))}
      <div className="ml-[33px] flex items-center">
        <div className="w-[16px] h-[16px] rounded-full border border-[#8a8a8a] flex items-center justify-center text-[13px] leading-[13px] font-bold text-[#8a8a8a]">+</div>
      </div>
      <div className="ml-[74px] flex flex-col justify-center gap-[2px]">
        <div className="w-[2px] h-[2px] bg-[#a0a0a0]" />
        <div className="w-[2px] h-[2px] bg-[#a0a0a0]" />
        <div className="w-[2px] h-[2px] bg-[#a0a0a0]" />
      </div>
      <div className="ml-[17px] flex-1 mt-[7px] h-[14px] flex border-y border-[#a8a8a8] bg-white">
        <div className="w-[13px] border-x border-[#a8a8a8] bg-[#f3f3f3] flex items-center justify-center">
          <svg width="4" height="7" viewBox="0 0 4 7"><path d="M4 0v7L0 3.5z" fill="#333333" /></svg>
        </div>
      </div>
    </div>
  );
}

function StatusBar() {
  return (
    <div className="h-[12px] bg-[#f3f3f3] flex pl-[8px] text-[12px] leading-[14px] pt-[1px] text-[#444444] overflow-hidden shrink-0">
      <span>Edit</span>
      <div className="ml-auto flex gap-[24px] mr-[27px] pt-[1px]">
        <svg width="14" height="12" viewBox="0 0 14 12" fill="none" stroke="#777777"><path d="M.5.5h13v11H.5zM0 4.5h14M0 8.5h14M5 0v12M9 0v12" /></svg>
        <svg width="14" height="12" viewBox="0 0 14 12" fill="none" stroke="#777777"><path d="M.5.5h13v11H.5zM3.5 3.5h7v8h-7zM5 6h4M5 8h4" /></svg>
        <svg width="14" height="12" viewBox="0 0 14 12" fill="none" stroke="#777777"><path d="M.5.5h13v11H.5zM5 0v7h4V0" /></svg>
      </div>
    </div>
  );
}

export default function App() {
  return (
    <div className="w-[1762px] h-[1023px] overflow-hidden flex flex-col font-['Noto_Sans',sans-serif]">
      <TitleBar />
      <MenuTabs />
      <Ribbon />
      <FormulaBar />
      <ColumnHeaders />
      <Sheet />
      <SheetTabs />
      <StatusBar />
    </div>
  );
}
